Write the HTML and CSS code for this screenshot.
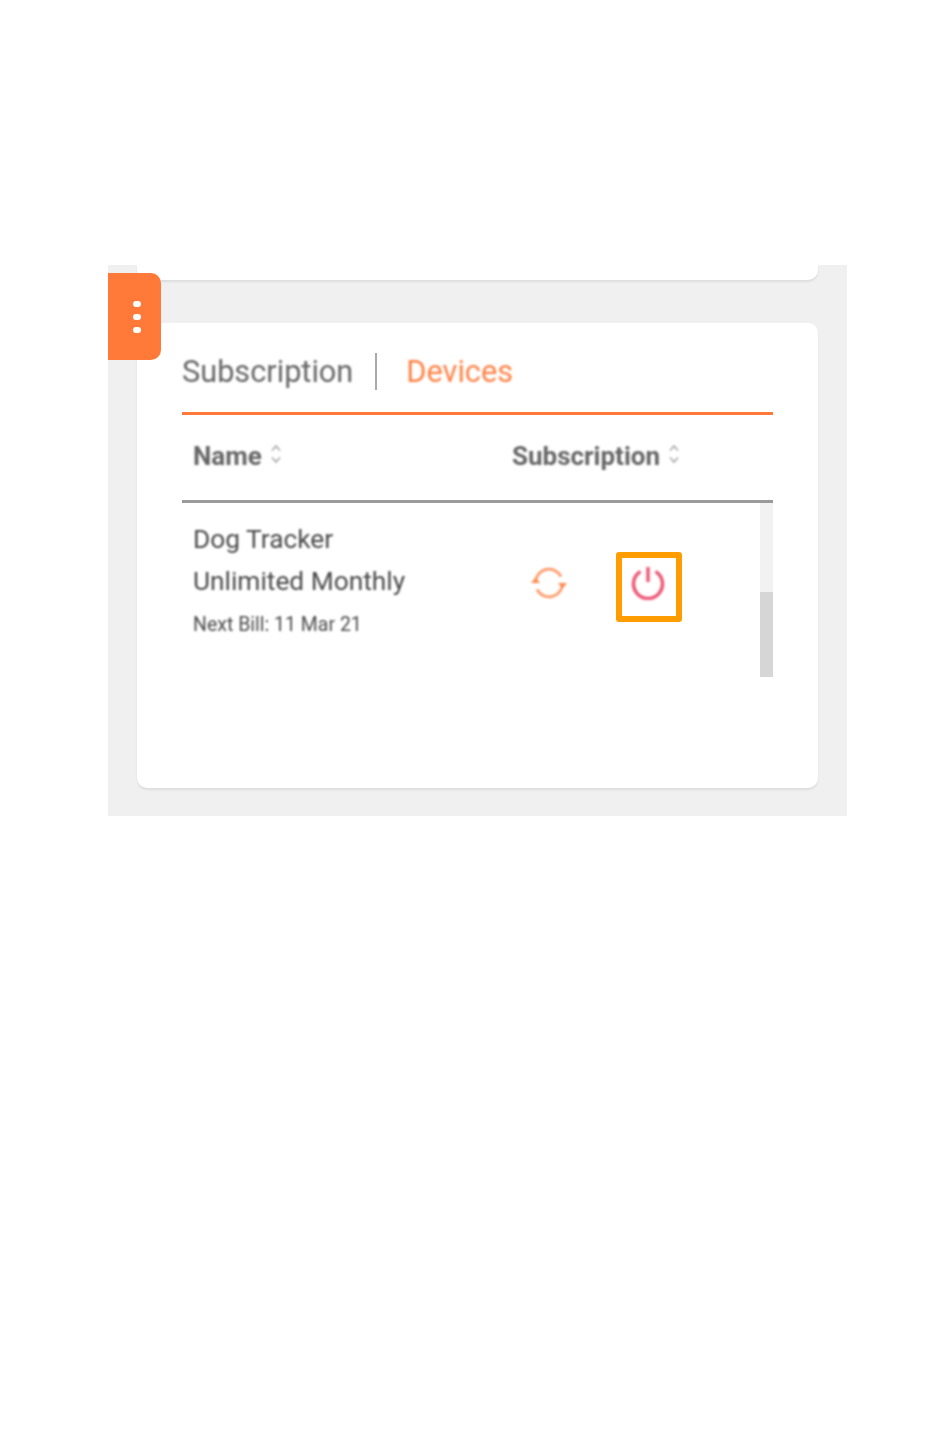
FILE: index.html
```html
<!DOCTYPE html>
<html lang="en">
<head>
    <meta charset="UTF-8">
    <meta name="viewport" content="width=device-width, initial-scale=1.0">
    <title>Devices</title>
    <link rel="stylesheet" href="styles.css">
</head>
<body>
    <div class="panel">
        <!-- Side menu tab -->
        <div class="menu-tab">
            <span class="dot"></span>
            <span class="dot"></span>
            <span class="dot"></span>
        </div>

        <div class="card-end"></div>

        <div class="card">
            <div class="tabs">
                <span class="tab">Subscription</span>
                <span class="tab-divider"></span>
                <span class="tab active">Devices</span>
            </div>

            <div class="table-head">
                <div class="head-cell name-col">
                    Name
                    <svg class="sort" viewBox="0 0 12 22" width="12" height="22">
                        <path d="M2 7.5 L6 3 L10 7.5 M2 14.5 L6 19 L10 14.5"></path>
                    </svg>
                </div>
                <div class="head-cell">
                    Subscription
                    <svg class="sort" viewBox="0 0 12 22" width="12" height="22">
                        <path d="M2 7.5 L6 3 L10 7.5 M2 14.5 L6 19 L10 14.5"></path>
                    </svg>
                </div>
            </div>

            <div class="table-body">
                <div class="row">
                    <div class="name-col">
                        <div class="device">Dog Tracker</div>
                        <div class="device">Unlimited Monthly</div>
                        <div class="next-bill">Next Bill: 11 Mar 21</div>
                    </div>
                    <div class="actions">
                        <button class="icon-btn refresh">
                            <svg viewBox="0 0 38 32" width="38" height="32">
                                <path class="refresh-line" d="M5.5 15 A13.5 13.5 0 0 1 31 9.5"></path>
                                <path class="refresh-line" d="M32.5 17 A13.5 13.5 0 0 1 7 22.5"></path>
                                <path class="refresh-head" d="M1 16 L5.5 10.5 L10 16 Z"></path>
                                <path class="refresh-head" d="M28 16 L32.5 21.5 L37 16 Z"></path>
                            </svg>
                        </button>
                        <button class="icon-btn power">
                            <svg viewBox="0 0 34 34" width="34" height="34">
                                <path class="power-line" d="M9.5 5.5 A14.5 14.5 0 1 0 24.5 5.5"></path>
                                <path class="power-line" d="M17 1 L17 16"></path>
                            </svg>
                        </button>
                    </div>
                    <div class="scrollbar"><div class="thumb"></div></div>
                </div>
            </div>
        </div>
    </div>
</body>
</html>
```

FILE: styles.css
```css
body {
    font-family: Roboto, "Liberation Sans", sans-serif;
    margin: 0;
    padding: 265px 0 0 108px;
    background-color: #fff;
}
.panel {
    position: relative;
    box-sizing: border-box;
    width: 739px;
    height: 551px;
    padding: 0 29px;
    background-color: #f0f0f0;
}
.menu-tab {
    position: absolute;
    top: 8px;
    left: 0;
    z-index: 1;
    display: flex;
    flex-direction: column;
    align-items: center;
    justify-content: center;
    gap: 7px;
    width: 53px;
    height: 87px;
    padding-left: 4px;
    box-sizing: border-box;
    background-color: #ff7a39;
    border-radius: 0 10px 10px 0;
}
.dot {
    width: 8px;
    height: 6px;
    background-color: #fff;
    border-radius: 3px;
}
.card-end {
    height: 15px;
    margin-bottom: 43px;
    background-color: #fff;
    border-radius: 0 0 10px 10px;
    box-shadow: 0 2px 2px rgba(0, 0, 0, 0.08);
}
.card {
    box-sizing: border-box;
    height: 465px;
    padding: 0 45px;
    background-color: #fff;
    border-radius: 10px;
    box-shadow: 0 2px 2px rgba(0, 0, 0, 0.08);
}
.tabs {
    display: flex;
    align-items: center;
    box-sizing: border-box;
    height: 92px;
    padding-top: 8px;
    border-bottom: 3px solid #ff7a39;
}
.tab {
    font-size: 30.7px;
    color: #666;
    filter: blur(0.8px);
}
.tab.active {
    color: #ff8245;
}
.tab-divider {
    width: 2px;
    height: 37px;
    margin: 0 29px 0 22px;
    background-color: #aaa;
}
.table-head {
    display: flex;
    align-items: center;
    box-sizing: border-box;
    height: 88px;
    padding-bottom: 3px;
    border-bottom: 3px solid #9a9a9a;
}
.head-cell {
    display: flex;
    align-items: center;
    gap: 8px;
    font-size: 26px;
    font-weight: 700;
    color: #666;
    filter: blur(0.9px);
}
.name-col {
    width: 330px;
    padding-left: 11px;
    box-sizing: border-box;
}
.sort {
    margin-top: -4px;
}
.sort path {
    fill: none;
    stroke: #a8a8a8;
    stroke-width: 1.6;
}
.table-body {
    height: 174px;
}
.row {
    display: flex;
    height: 100%;
}
.device {
    font-size: 26.3px;
    line-height: 42px;
    color: #4a4a4a;
}
.next-bill {
    font-size: 19.5px;
    line-height: 45px;
    color: #4a4a4a;
}
.row .name-col {
    padding-top: 15px;
    filter: blur(0.8px);
}
.actions {
    display: flex;
    align-items: flex-start;
    flex: 1;
    padding-top: 49px;
}
.icon-btn {
    display: flex;
    align-items: center;
    justify-content: center;
    padding: 0;
    background: none;
    border: none;
}
.icon-btn svg {
    filter: blur(0.8px);
}
.refresh {
    width: 38px;
    height: 62px;
    margin-left: 18px;
}
.power {
    box-sizing: border-box;
    width: 66px;
    height: 70px;
    margin-left: 48px;
    padding: 0 2px 8px 0;
    border: 6px solid #ff9d00;
    border-radius: 3px;
}
.refresh-line {
    fill: none;
    stroke: #ff9a68;
    stroke-width: 2.8;
}
.refresh-head {
    fill: #ff8a50;
}
.power-line {
    fill: none;
    stroke: #ec5a78;
    stroke-width: 3.5;
}
.scrollbar {
    display: flex;
    align-items: flex-end;
    width: 13px;
    height: 174px;
    background-color: #f2f2f2;
}
.thumb {
    width: 100%;
    height: 85px;
    background-color: #d6d6d6;
}
```
